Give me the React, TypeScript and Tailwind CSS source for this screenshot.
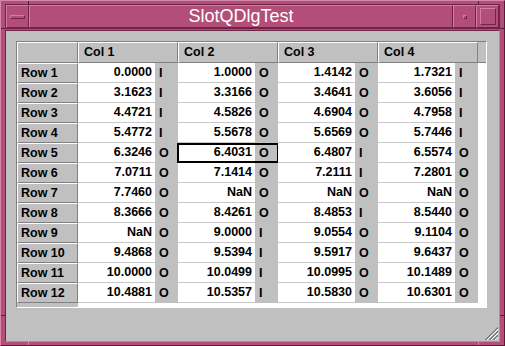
import React from "react";

type Cell = [string, "I" | "O"];

const rows: Cell[][] = [
  [["0.0000", "I"], ["1.0000", "O"], ["1.4142", "O"], ["1.7321", "I"]],
  [["3.1623", "I"], ["3.3166", "O"], ["3.4641", "O"], ["3.6056", "I"]],
  [["4.4721", "I"], ["4.5826", "O"], ["4.6904", "O"], ["4.7958", "I"]],
  [["5.4772", "I"], ["5.5678", "O"], ["5.6569", "O"], ["5.7446", "I"]],
  [["6.3246", "O"], ["6.4031", "O"], ["6.4807", "I"], ["6.5574", "O"]],
  [["7.0711", "O"], ["7.1414", "O"], ["7.2111", "I"], ["7.2801", "O"]],
  [["7.7460", "O"], ["NaN", "O"], ["NaN", "O"], ["NaN", "O"]],
  [["8.3666", "O"], ["8.4261", "O"], ["8.4853", "I"], ["8.5440", "O"]],
  [["NaN", "O"], ["9.0000", "I"], ["9.0554", "O"], ["9.1104", "O"]],
  [["9.4868", "O"], ["9.5394", "I"], ["9.5917", "O"], ["9.6437", "O"]],
  [["10.0000", "O"], ["10.0499", "I"], ["10.0995", "O"], ["10.1489", "O"]],
  [["10.4881", "O"], ["10.5357", "I"], ["10.5830", "O"], ["10.6301", "O"]],
];

const cols = ["Col 1", "Col 2", "Col 3", "Col 4"];

// selected cell: Row 5, Col 2
const current = { row: 4, col: 1 };

const bevel = "border-t border-l border-t-white border-l-white border-b border-r border-b-[#808080] border-r-[#808080]";
const titleBevel = "border-t border-l border-t-[#d07ea2] border-l-[#d07ea2] border-b border-r border-b-[#6f2347] border-r-[#6f2347]";

export default function App() {
  return (
    <div
      className="relative flex h-[346px] w-[505px] flex-col border border-t-[#d589aa] border-l-[#d589aa] border-b-[#5a1a38] border-r-[#5a1a38] bg-[#b24e78] px-[4px] pt-[3px] pb-[3px] text-black"
      style={{ fontFamily: '"Liberation Sans", Arial, sans-serif' }}
    >
      {/* title bar */}
      <div className="flex h-[25px] gap-0 border border-[#6f2347]">
        <div className={`flex w-[23px] items-center justify-center ${titleBevel}`}>
          <div className={`h-[4px] w-[15px] ${titleBevel}`} />
        </div>
        <div className={`flex flex-1 items-center justify-center text-[18px] text-white ${titleBevel}`}>
          SlotQDlgTest
        </div>
        <div className={`flex w-[23px] items-center justify-center ${titleBevel}`}>
          <div className={`h-[4px] w-[4px] ${titleBevel}`} />
        </div>
        <div className={`flex w-[23px] items-center justify-center ${titleBevel}`}>
          <div className={`h-[17px] w-[16px] ${titleBevel}`} />
        </div>
      </div>

      {/* client area */}
      <div className="mt-[1px] flex-1 border border-t-[#6f2347] border-l-[#6f2347] border-b-[#d07ea2] border-r-[#d07ea2] bg-[#c0c0c0] p-[10px]">
        <div className="flex h-[267px] w-[471px] flex-col border border-t-[#808080] border-l-[#808080] border-b-white border-r-white bg-[#c0c0c0] text-[12.5px] font-bold">
          {/* header */}
          <div className="flex h-[21px]">
            <div className={`w-[61px] ${bevel}`} />
            {cols.map((c) => (
              <div key={c} className={`flex w-[100px] items-center pl-[5px] ${bevel}`}>
                {c}
              </div>
            ))}
            <div className="flex-1 border-b border-b-[#808080]" />
          </div>

          {/* body */}
          <div className="flex flex-1 flex-col">
            {rows.map((r, ri) => (
              <div key={ri} className="flex h-[20px]">
                <div className={`flex w-[61px] items-center pl-[3px] ${bevel}`}>Row {ri + 1}</div>
                {r.map(([v, io], ci) => (
                  <div key={ci} className="relative flex w-[100px]">
                    <div className="flex w-[77px] items-center justify-end border-b border-b-[#c8c8c8] bg-white pr-[3px]">
                      {v}
                    </div>
                    <div className="flex w-[23px] items-center pl-[4px]">{io}</div>
                    {current.row === ri && current.col === ci ? (
                      <div className="absolute top-0 bottom-0 left-[-1px] right-[-1px] border-2 border-black" />
                    ) : null}
                  </div>
                ))}
                <div className="flex-1 bg-white" />
              </div>
            ))}
            <div className="flex flex-1">
              <div className="w-[61px]" />
              <div className="flex-1 bg-white" />
            </div>
          </div>
        </div>
      </div>

      {/* frame resize ticks */}
      <div className="absolute top-0 left-[27px] h-[4px] w-px bg-[#5a1a38]" />
      <div className="absolute top-0 right-[25px] h-[4px] w-px bg-[#5a1a38]" />
      <div className="absolute bottom-0 left-[27px] h-[4px] w-px bg-[#d589aa]" />
      <div className="absolute bottom-0 right-[25px] h-[4px] w-px bg-[#d589aa]" />
      <div className="absolute top-[27px] left-0 h-px w-[4px] bg-[#5a1a38]" />
      <div className="absolute top-[27px] right-0 h-px w-[4px] bg-[#5a1a38]" />
      <div className="absolute bottom-[29px] left-0 h-px w-[4px] bg-[#5a1a38]" />
      <div className="absolute bottom-[29px] right-0 h-px w-[4px] bg-[#5a1a38]" />

      {/* size grip */}
      <svg className="absolute right-[6px] bottom-[5px]" width="13" height="13" viewBox="0 0 13 13">
        {[0, 4, 8].map((o) => (
          <g key={o}>
            <line x1={13} y1={o} x2={o} y2={13} stroke="#808080" strokeWidth={1} />
            <line x1={13} y1={o + 1} x2={o + 1} y2={13} stroke="#808080" strokeWidth={1} />
            <line x1={13} y1={o + 2} x2={o + 2} y2={13} stroke="#ffffff" strokeWidth={1} />
          </g>
        ))}
      </svg>
    </div>
  );
}
